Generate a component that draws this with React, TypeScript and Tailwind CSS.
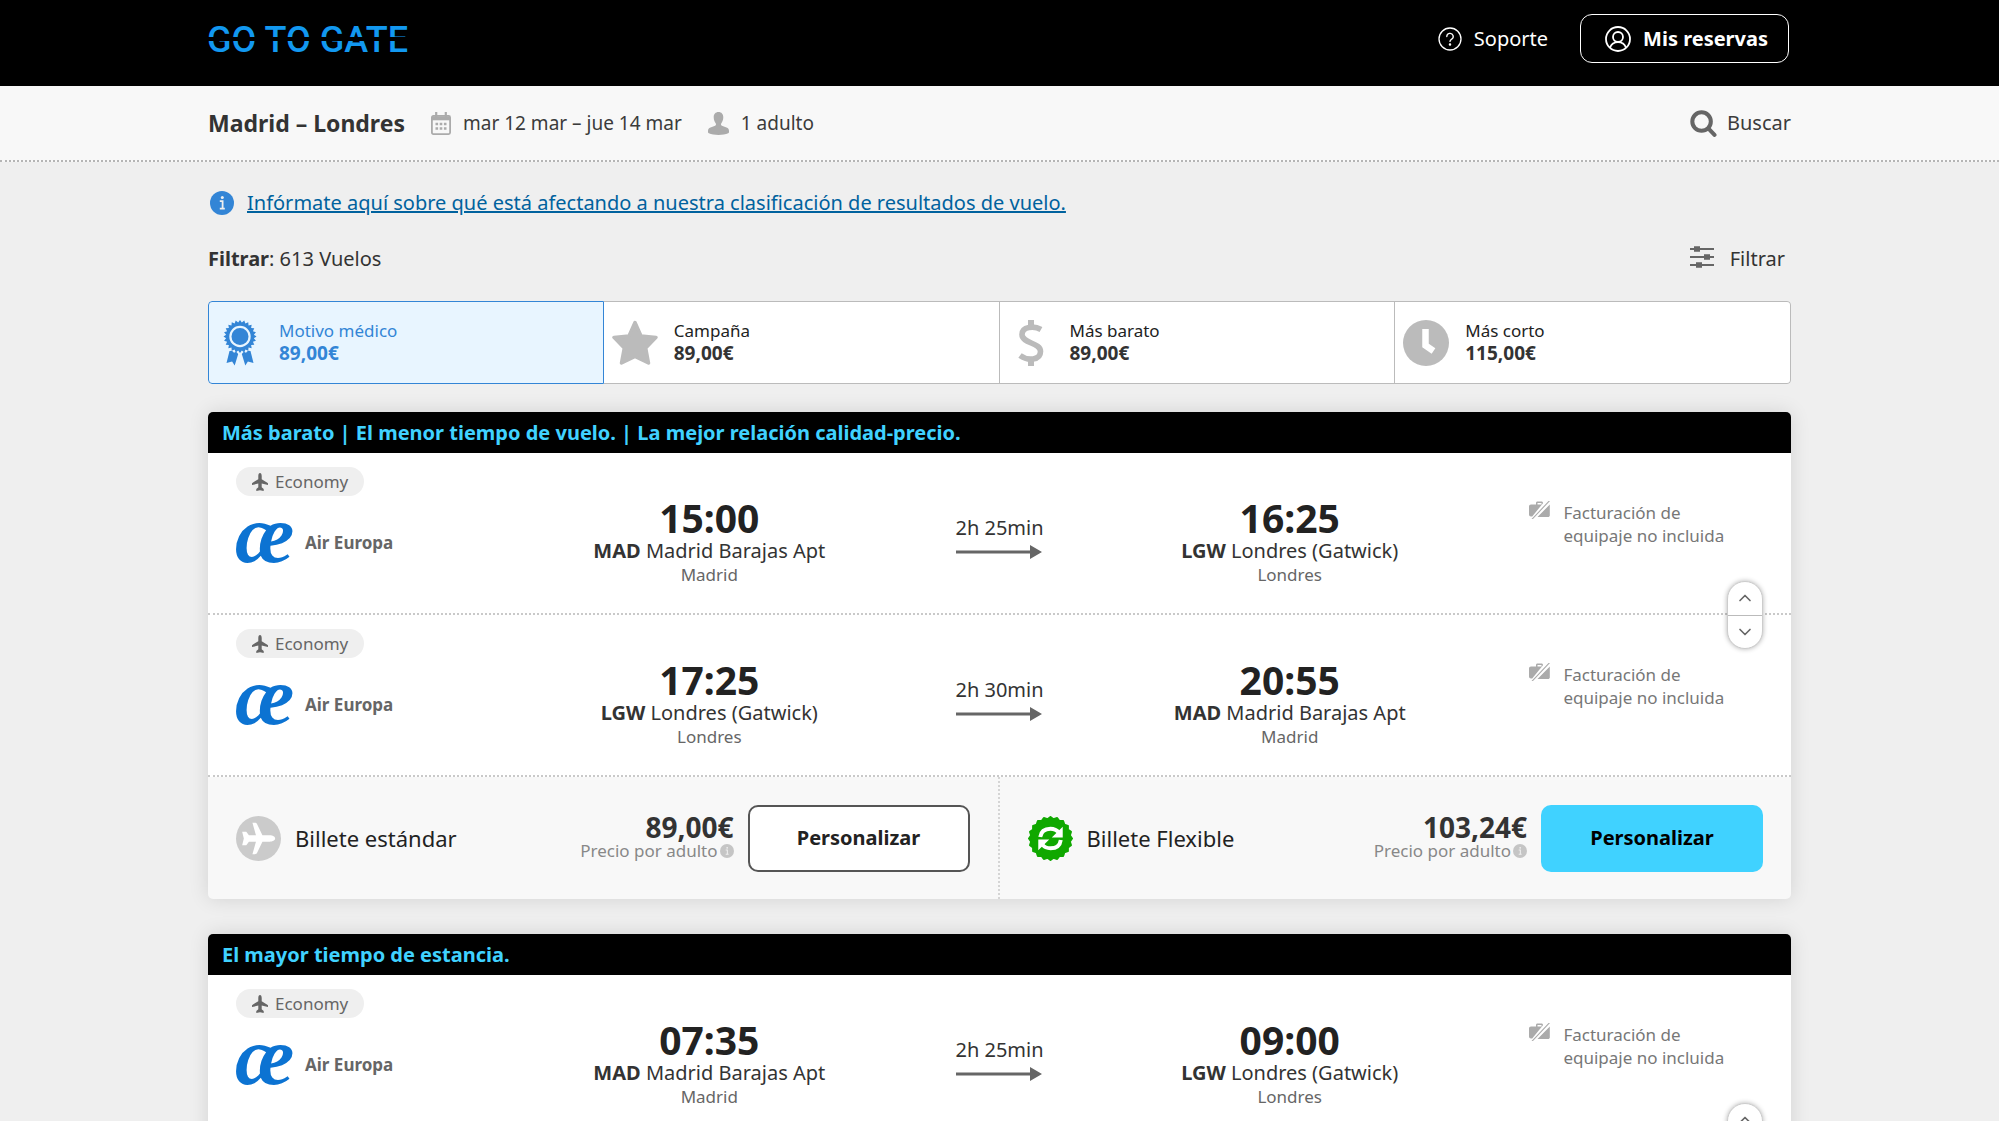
import React from 'react';
import { ChevronDown, ChevronUp } from 'lucide-react';

interface Leg {
  departure: string;
  fromCode: string;
  fromAirport: string;
  fromCity: string;
  duration: string;
  arrival: string;
  toCode: string;
  toAirport: string;
  toCity: string;
}

interface IconProps {
  className?: string;
}

// points of a toothed circle, used by the badge-like icons
const seal = (cx: number, cy: number, outer: number, inner: number, teeth: number) =>
  Array.from({ length: teeth * 2 }, (_, i) => {
    const r = i % 2 === 0 ? outer : inner;
    const a = (Math.PI * i) / teeth;
    return `${(cx + r * Math.sin(a)).toFixed(2)},${(cy - r * Math.cos(a)).toFixed(2)}`;
  }).join(' ');

const HelpIcon = ({ className }: IconProps) => (
  <svg viewBox="0 0 24 24" className={className} fill="none" stroke="currentColor" strokeWidth="1.3" strokeLinecap="round">
    <circle cx="12" cy="12" r="11" />
    <path d="M8.8 9.6a3.2 3.2 0 1 1 4.6 2.8c-.9.5-1.4 1-1.4 2" />
    <circle cx="12" cy="17.4" r=".6" fill="currentColor" />
  </svg>
);

const AccountIcon = ({ className }: IconProps) => (
  <svg viewBox="0 0 26 26" className={className} fill="none" stroke="currentColor" strokeWidth="1.8">
    <circle cx="13" cy="13" r="12" />
    <circle cx="13" cy="11" r="5" />
    <path d="M5 21.8c1.2-3.4 4.2-5.6 8-5.6s6.8 2.2 8 5.6" />
  </svg>
);

const CalendarIcon = ({ className }: IconProps) => (
  <svg viewBox="0 0 20 23" className={className} fill="none" stroke="currentColor">
    <rect x=".9" y="3.9" width="18.2" height="18.2" rx="1.5" strokeWidth="1.8" />
    <path d="M1 6.3h18" strokeWidth="4" />
    <path d="M5.2 0v5M14.8 0v5" strokeWidth="2.2" />
    <path d="M4.5 12h2.6M8.7 12h2.6M12.9 12h2.6M4.5 16.5h2.6M8.7 16.5h2.6M12.9 16.5h2.6" strokeWidth="2.6" />
  </svg>
);

const PersonIcon = ({ className }: IconProps) => (
  <svg viewBox="0 0 21 23" className={className} fill="currentColor">
    <path d="M10.5 0c3 0 4.8 2.2 4.8 5.2 0 2.8-1.1 4.8-2 6-.5.7-.4 2.2.6 2.6l4.6 1.7c1.7.6 2.5 1.8 2.5 3.4v1.4c0 .5-.3.8-.8 1-2.5 1-6.1 1.7-9.7 1.7s-7.2-.7-9.7-1.7c-.5-.2-.8-.5-.8-1v-1.400c0-1.600.8-2.800 2.500-3.400l4.600-1.700c1-.4 1.100-1.900.6-2.600-.9-1.200-2-3.200-2-6C5.700 2.200 7.500 0 10.500 0z" />
  </svg>
);

const SearchIcon = ({ className }: IconProps) => (
  <svg viewBox="0 0 28 28" className={className} fill="none" stroke="currentColor" strokeWidth="4.2">
    <circle cx="12" cy="12" r="9.6" />
    <path d="M19 19l6.4 6.8" strokeLinecap="round" />
  </svg>
);

const SlidersIcon = ({ className }: IconProps) => (
  <svg viewBox="0 0 24 22" className={className} fill="none" stroke="currentColor" strokeWidth="2.2">
    <path d="M0 3h24M0 11h24M0 19h24" />
    <path d="M4 3h6M14 11h6M6 19h6" strokeWidth="5.6" />
  </svg>
);

const InfoIcon = ({ className }: IconProps) => (
  <svg viewBox="0 0 24 24" className={className}>
    <circle cx="12" cy="12" r="12" fill="currentColor" />
    <circle cx="12.3" cy="6.6" r="1.5" fill="#efefef" />
    <path d="M9.8 10.2h2.8v7.2M9.8 17.7h5" fill="none" stroke="#efefef" strokeWidth="1.8" />
  </svg>
);

const MedalIcon = ({ className }: IconProps) => (
  <svg viewBox="0 0 34 46" className={className} fill="currentColor">
    <polygon points={seal(17, 16.5, 16.5, 14, 24)} />
    <circle cx="17" cy="16.5" r="9.6" fill="none" stroke="#e8f5ff" strokeWidth="2.2" />
    <path d="M6.5 31l2.5-.3 2 2 2.2-1 2 2.3-3.5 11.5-2.6-4-5.6 1.6zM27.5 31l-2.5-.3-2 2-2.2-1-2 2.3 3.5 11.5 2.6-4 5.6 1.6z" />
  </svg>
);

const StarIcon = ({ className }: IconProps) => (
  <svg viewBox="0 0 46 46" className={className} fill="currentColor" stroke="currentColor" strokeWidth="3.5" strokeLinejoin="round">
    <path d="M23 2.500l6 13.500 15 1.400L33.700 28 36.500 43 23 36.500 9.500 43 12.300 28 2 17.400l15-1.400z" />
  </svg>
);

const DollarIcon = ({ className }: IconProps) => (
  <svg viewBox="0 0 26 46" className={className} fill="none" stroke="currentColor">
    <path d="M13 0v7M13 39v7" strokeWidth="6" />
    <path d="M23 9.5C16 5.5 4 6.5 4 14.5c0 9 18.5 8 18.5 17 0 9-13 9.5-20.5 4" strokeWidth="5.6" />
  </svg>
);

const ClockIcon = ({ className }: IconProps) => (
  <svg viewBox="0 0 46 46" className={className}>
    <circle cx="23" cy="23" r="23" fill="currentColor" />
    <path d="M22.5 9v16.5l8 5.500" fill="none" stroke="#fff" strokeWidth="6.5" />
  </svg>
);

const PlaneIcon = ({ className }: IconProps) => (
  <svg viewBox="0 0 16 18" className={className} fill="currentColor">
    <path d="M8 0c1 0 1.7 1.3 1.7 3v3.200l6 3.700c.2.100.3.300.3.500v1.700l-6.300-1.500v3.700l2 1.700V18L8 17.200 4.300 18v-2l2-1.700v-3.700L0 12.100v-1.700c0-.2.100-.4.300-.5l6-3.700V3C6.300 1.300 7 0 8 0z" />
  </svg>
);

const StandardTicketIcon = ({ className }: IconProps) => (
  <svg viewBox="0 0 46 46" className={className}>
    <circle cx="23" cy="23" r="23" fill="#cbcbcb" />
    <path
      d="M40 23c0 1.8-2.5 3.2-5.5 3.2H27l-5.4 11.4c-.5 1-1.3 1.4-2.4 1.4h-2.4l3.6-12.8h-7.2l-2.7 3.7H6.3L8 23 6.3 16.1h4.2l2.7 3.7h7.2L16.8 7h2.4c1.1 0 1.900.4 2.400 1.400L27 19.800h7.500c3 0 5.500 1.400 5.500 3.200z"
      fill="#fff"
    />
  </svg>
);

const FlexTicketIcon = ({ className }: IconProps) => (
  <svg viewBox="0 0 46 46" className={className}>
    <polygon points={seal(23, 23, 22, 20, 20)} fill="#10a800" stroke="#10a800" strokeWidth="2" strokeLinejoin="round" />
    <path d="M12.5 21.5c.8-6 5-8.500 10.500-8.500 4 0 6.500 1.500 8.500 4M33.500 24.500c-.8 6-5 8.500-10.500 8.500-4 0-6.500-1.500-8.500-4" fill="none" stroke="#fff" strokeWidth="4" />
    <path d="M35.500 11v11H24.300zM10.500 35V24h11.200z" fill="#fff" />
  </svg>
);

const NoBaggageIcon = ({ className }: IconProps) => (
  <svg viewBox="0 0 21 18" className={className} fill="currentColor">
    <path d="M2 3.500h5V2c0-1 .6-1.600 1.600-1.600h3.800c1 0 1.600.6 1.600 1.600v.2L3.200 15.500H2c-1.200 0-2-.8-2-2v-8c0-1.200.8-2 2-2zm6.500 0h4V2h-4z" fillRule="evenodd" />
    <path d="M20.800 3.500v11c0 .8-.7 1.500-1.800 1.500H8.500zM19.500 0h1.500L4 18H2.500z" />
  </svg>
);

const ArrowIcon = ({ className }: IconProps) => (
  <svg viewBox="0 0 86 14" className={className} fill="#666">
    <path d="M0 5.4h74V0l12 7-12 7V8.600H0z" />
  </svg>
);

const GateLogo = () => (
  <svg viewBox="0 0 200 40" className="h-10 w-[200px] overflow-visible" role="img" aria-label="Go to gate">
    <text x="-1" y="33" fill="#1298f0" fontSize="36" fontFamily="Roboto, sans-serif" fontWeight="500">
      GO TO GATE
    </text>
    <rect x="0" y="18" width="200" height="4" fill="#000" />
  </svg>
);

const AirEuropaLogo = () => (
  <svg viewBox="0 0 56 42" className="h-[42px] w-14 overflow-visible" aria-hidden="true">
    <text x="-1" y="40" fill="#0c73d2" fontSize="82" fontFamily="'Liberation Serif', serif" fontStyle="italic">
      æ
    </text>
  </svg>
);

const Header = () => (
  <header className="h-[86px] bg-black text-white">
    <div className="mx-auto flex w-full max-w-[1583px] items-start justify-between">
      <a href="#inicio" className="mt-[19px]">
        <GateLogo />
      </a>
      <nav className="mt-[14px] flex items-center gap-8 pr-0.5">
        <a href="#soporte" className="flex items-center gap-3 text-[20px]">
          <HelpIcon className="size-6" />
          Soporte
        </a>
        <button className="flex h-[49px] items-center gap-3 rounded-xl border border-white pr-5 pl-6 text-[20px] font-bold">
          <AccountIcon className="size-[26px]" />
          Mis reservas
        </button>
      </nav>
    </div>
  </header>
);

const SearchBar = () => (
  <div className="border-b-2 border-dotted border-[#b5b5b5] bg-[#f8f8f8]">
    <div className="mx-auto flex h-[74px] w-full max-w-[1583px] items-center justify-between text-[20px] text-[#3b3b3b]">
      <div className="flex items-center text-[19px]">
        <h1 className="text-[23px] font-bold text-[#333]">Madrid – Londres</h1>
        <CalendarIcon className="mr-3 ml-[26px] h-[23px] w-5 text-[#ababab]" />
        <span>mar 12 mar – jue 14 mar</span>
        <PersonIcon className="mr-3 ml-[26px] h-[23px] w-[21px] text-[#ababab]" />
        <span>1 adulto</span>
      </div>
      <button className="flex items-center gap-[10px]">
        <SearchIcon className="size-[27px] text-[#666]" />
        Buscar
      </button>
    </div>
  </div>
);

const tabs = [
  { label: 'Motivo médico', price: '89,00€', icon: <MedalIcon className="h-[46px] w-[34px]" /> },
  { label: 'Campaña', price: '89,00€', icon: <StarIcon className="size-[46px]" /> },
  { label: 'Más barato', price: '89,00€', icon: <DollarIcon className="h-[46px] w-[26px]" /> },
  { label: 'Más corto', price: '115,00€', icon: <ClockIcon className="size-[46px]" /> },
];

const SortTabs = () => (
  <div className="grid h-[83px] grid-cols-4 overflow-hidden rounded-[4px]">
    {tabs.map((tab, i) => (
      <button
        key={tab.label}
        className={
          i === 0
            ? 'flex items-center rounded-l-[4px] border border-[#3385d6] bg-[#e8f5ff] text-left text-[#3385d6]'
            : 'flex items-center border border-l-0 border-[#bbb] bg-white text-left text-[#222] last:rounded-r-[4px]'
        }
      >
        <span className={i === 0 ? 'flex w-[62px] justify-center' : 'flex w-[62px] justify-center text-[#bbb]'}>{tab.icon}</span>
        <span className="ml-2 flex flex-col pb-0.5 leading-[23px]">
          <span className="text-[17px]">{tab.label}</span>
          <span className={i === 0 ? 'text-[19px] font-bold' : 'text-[19px] font-bold text-[#333]'}>{tab.price}</span>
        </span>
      </button>
    ))}
  </div>
);

const Stop = ({ time, code, airport, city }: { time: string; code: string; airport: string; city: string }) => (
  <div className="flex flex-col items-center pt-11">
    <span className="text-[39px] leading-[42px] font-bold text-[#222]">{time}</span>
    <span className="text-[20px] leading-6 text-[#333]">
      <b>{code}</b> {airport}
    </span>
    <span className="text-[17px] leading-6 text-[#666]">{city}</span>
  </div>
);

const LegRow = ({ leg }: { leg: Leg }) => (
  <div className="grid h-[162px] grid-cols-[6fr_7fr_4fr_7fr_6fr] border-b-2 border-dotted border-[#c9c9c9] bg-white">
    <div className="flex flex-col items-start pt-[14px] pl-7">
      <span className="flex h-[29px] items-center gap-[7px] rounded-full bg-[#efefef] px-4 text-[17px] text-[#666]">
        <PlaneIcon className="h-[18px] w-4" />
        Economy
      </span>
      <div className="mt-[26px] flex items-center gap-[13px] text-[17px] font-bold text-[#666]">
        <AirEuropaLogo />
        Air Europa
      </div>
    </div>
    <Stop time={leg.departure} code={leg.fromCode} airport={leg.fromAirport} city={leg.fromCity} />
    <div className="flex flex-col items-center pt-[62px]">
      <span className="text-[20px] leading-[26px] text-[#333]">{leg.duration}</span>
      <ArrowIcon className="mt-1 h-[14px] w-[86px]" />
    </div>
    <Stop time={leg.arrival} code={leg.toCode} airport={leg.toAirport} city={leg.toCity} />
    <div className="flex items-start gap-[13px] pt-12 pl-[55px] text-[17px] leading-[23px] text-[#777]">
      <NoBaggageIcon className="h-[18px] w-[21px] shrink-0 text-[#ababab]" />
      <span>
        Facturación de
        <br />
        equipaje no incluida
      </span>
    </div>
  </div>
);

const Fare = ({ name, price, icon, flexible }: { name: string; price: string; icon: React.ReactNode; flexible?: boolean }) => (
  <div className="flex h-[122px] items-center px-7 not-last:border-r-2 not-last:border-dotted not-last:border-[#d5d5d5]">
    {icon}
    <span className="ml-[14px] text-[22px] text-[#222]">{name}</span>
    <div className="mr-[14px] ml-auto flex flex-col items-end">
      <span className="text-[28px] leading-[26px] font-bold text-[#333]">{price}</span>
      <span className="flex items-center gap-0.5 text-[17px] leading-[22px] text-[#888]">
        Precio por adulto
        <InfoIcon className="size-[14px] text-[#c5c5c5]" />
      </span>
    </div>
    <button
      className={
        flexible
          ? 'h-[67px] w-[222px] rounded-[10px] bg-[#40d2ff] text-[20px] font-bold text-black'
          : 'h-[67px] w-[222px] rounded-[10px] border-2 border-[#555] bg-white text-[20px] font-bold text-[#222]'
      }
    >
      Personalizar
    </button>
  </div>
);

const TripCard = ({ title, legs, standard, flexible }: { title: string; legs: Leg[]; standard: string; flexible: string }) => (
  <article className="rounded-[5px] bg-[#f8f8f8] shadow-[0_0_20px_rgba(0,0,0,0.12)]">
    <h2 className="h-[41px] rounded-t-[5px] bg-black px-[14px] text-[20px] leading-[41px] font-bold text-[#40d2ff]">{title}</h2>
    <div className="relative">
      {legs.map((leg) => (
        <LegRow key={leg.departure} leg={leg} />
      ))}
      <div className="absolute top-1/2 right-7 flex h-[68px] w-9 -translate-y-1/2 flex-col rounded-full border border-[#ccc] bg-white text-[#666] shadow-[0_0_5px_rgba(0,0,0,0.3)]">
        <button aria-label="Salida anterior" className="flex flex-1 items-center justify-center border-b border-[#bbb]">
          <ChevronUp className="size-5" />
        </button>
        <button aria-label="Salida siguiente" className="flex flex-1 items-center justify-center">
          <ChevronDown className="size-5" />
        </button>
      </div>
    </div>
    <div className="grid grid-cols-2">
      <Fare name="Billete estándar" price={standard} icon={<StandardTicketIcon className="size-[45px]" />} />
      <Fare name="Billete Flexible" price={flexible} icon={<FlexTicketIcon className="size-[45px]" />} flexible />
    </div>
  </article>
);

const outbound = {
  fromCode: 'MAD',
  fromAirport: 'Madrid Barajas Apt',
  fromCity: 'Madrid',
  toCode: 'LGW',
  toAirport: 'Londres (Gatwick)',
  toCity: 'Londres',
};

const inbound = {
  fromCode: 'LGW',
  fromAirport: 'Londres (Gatwick)',
  fromCity: 'Londres',
  toCode: 'MAD',
  toAirport: 'Madrid Barajas Apt',
  toCity: 'Madrid',
};

const trips = [
  {
    title: 'Más barato | El menor tiempo de vuelo. | La mejor relación calidad-precio.',
    legs: [
      { ...outbound, departure: '15:00', duration: '2h 25min', arrival: '16:25' },
      { ...inbound, departure: '17:25', duration: '2h 30min', arrival: '20:55' },
    ],
    standard: '89,00€',
    flexible: '103,24€',
  },
  {
    title: 'El mayor tiempo de estancia.',
    legs: [
      { ...outbound, departure: '07:35', duration: '2h 25min', arrival: '09:00' },
      { ...inbound, departure: '17:25', duration: '2h 30min', arrival: '20:55' },
    ],
    standard: '89,00€',
    flexible: '103,24€',
  },
];

export default function App() {
  return (
    <div className="h-screen overflow-hidden bg-[#efefef] font-['Noto_Sans',sans-serif]">
      <Header />
      <SearchBar />
      <main className="mx-auto w-full max-w-[1583px]">
        <div className="flex h-[82px] items-center gap-[13px] pl-0.5 text-[20px]">
          <InfoIcon className="size-6 text-[#3385d6]" />
          <a href="#clasificacion" className="text-[#00629e] underline">
            Infórmate aquí sobre qué está afectando a nuestra clasificación de resultados de vuelo.
          </a>
        </div>
        <div className="flex h-[57px] items-start justify-between text-[20px] leading-[30px] text-[#333]">
          <p>
            <b>Filtrar</b>: 613 Vuelos
          </p>
          <button className="flex items-start gap-4 pr-1.5">
            <SlidersIcon className="mt-0.5 h-[22px] w-6 text-[#666]" />
            Filtrar
          </button>
        </div>
        <SortTabs />
        <div className="mt-7 flex flex-col gap-[35px]">
          {trips.map((trip) => (
            <TripCard key={trip.title} {...trip} />
          ))}
        </div>
      </main>
    </div>
  );
}
